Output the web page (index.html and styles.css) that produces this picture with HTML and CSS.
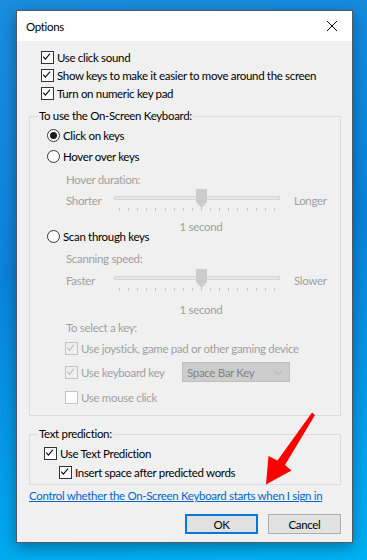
FILE: index.html
```html
<!DOCTYPE html>
<html lang="en">

<head>
    <meta charset="UTF-8">
    <meta name="viewport" content="width=device-width, initial-scale=1.0">
    <title>Options</title>
    <link rel="stylesheet" href="styles.css">
</head>

<body>
    <div class="dialog">
        <div class="titlebar">
            <span class="title">Options</span>
            <svg class="close" width="12" height="12" viewBox="0 0 12 12">
                <path d="M1 1 L11 11 M11 1 L1 11" stroke="#000" stroke-width="1" fill="none" />
            </svg>
        </div>

        <div class="content">
            <div class="top-checks">
                <div class="check-row">
                    <span class="box"><svg viewBox="0 0 13 13"><path d="M2.5 6.5 L5 9.5 L10.5 3" /></svg></span>
                    Use click sound
                </div>
                <div class="check-row">
                    <span class="box"><svg viewBox="0 0 13 13"><path d="M2.5 6.5 L5 9.5 L10.5 3" /></svg></span>
                    Show keys to make it easier to move around the screen
                </div>
                <div class="check-row">
                    <span class="box"><svg viewBox="0 0 13 13"><path d="M2.5 6.5 L5 9.5 L10.5 3" /></svg></span>
                    Turn on numeric key pad
                </div>
            </div>

            <fieldset class="group group-keyboard">
                <legend>To use the On-Screen Keyboard:</legend>

                <div class="radio-row radio-first"><span class="radio on"></span>Click on keys</div>
                <div class="radio-row radio-hover"><span class="radio"></span>Hover over keys</div>

                <div class="caption caption-hover">Hover duration:</div>
                <div class="slider-row">
                    <span>Shorter</span>
                    <div class="slider">
                        <div class="track"></div>
                        <svg class="thumb" width="11" height="19" viewBox="0 0 11 19">
                            <path d="M0 0 H11 V13 L5.5 19 L0 13 Z" fill="#cccccc" />
                        </svg>
                        <div class="ticks">
                            <i></i><i></i><i></i><i></i><i></i><i></i><i></i><i></i><i></i>
                            <i></i><i></i><i></i><i></i><i></i><i></i><i></i><i></i><i></i>
                        </div>
                    </div>
                    <span class="end-right">Longer</span>
                </div>
                <div class="value value-hover">1 second</div>

                <div class="radio-row radio-scan"><span class="radio"></span>Scan through keys</div>

                <div class="caption caption-scan">Scanning speed:</div>
                <div class="slider-row slider-scan">
                    <span>Faster</span>
                    <div class="slider">
                        <div class="track"></div>
                        <svg class="thumb" width="11" height="19" viewBox="0 0 11 19">
                            <path d="M0 0 H11 V13 L5.5 19 L0 13 Z" fill="#cccccc" />
                        </svg>
                        <div class="ticks">
                            <i></i><i></i><i></i><i></i><i></i><i></i><i></i><i></i><i></i>
                            <i></i><i></i><i></i><i></i><i></i><i></i><i></i><i></i><i></i>
                        </div>
                    </div>
                    <span class="end-right">Slower</span>
                </div>
                <div class="value value-scan">1 second</div>

                <div class="caption caption-select">To select a key:</div>
                <div class="check-row sub-check joystick">
                    <span class="box off"><svg viewBox="0 0 13 13"><path d="M2.5 6.5 L5 9.5 L10.5 3" /></svg></span>
                    Use joystick, game pad or other gaming device
                </div>
                <div class="check-row sub-check keyboard-key">
                    <span class="box off"><svg viewBox="0 0 13 13"><path d="M2.5 6.5 L5 9.5 L10.5 3" /></svg></span>
                    <span class="key-label">Use keyboard key</span>
                    <div class="combo">
                        <span>Space Bar Key</span>
                        <svg width="9" height="5" viewBox="0 0 9 5">
                            <path d="M0.5 0.5 L4.5 4.5 L8.5 0.5" stroke="#b4b4b4" fill="none" />
                        </svg>
                    </div>
                </div>
                <div class="check-row sub-check mouse-click">
                    <span class="box off empty"></span>
                    Use mouse click
                </div>
            </fieldset>

            <fieldset class="group group-prediction">
                <legend>Text prediction:</legend>
                <div class="check-row prediction-row">
                    <span class="box"><svg viewBox="0 0 13 13"><path d="M2.5 6.5 L5 9.5 L10.5 3" /></svg></span>
                    Use Text Prediction
                </div>
                <div class="check-row prediction-row insert-row">
                    <span class="box"><svg viewBox="0 0 13 13"><path d="M2.5 6.5 L5 9.5 L10.5 3" /></svg></span>
                    Insert space after predicted words
                </div>
            </fieldset>

            <a class="link" href="#">Control whether the On-Screen Keyboard starts when I sign in</a>

            <div class="buttons">
                <button class="btn btn-default">OK</button>
                <button class="btn">Cancel</button>
            </div>
        </div>
    </div>

    <!-- annotation arrow drawn over the dialog -->
    <svg class="arrow" width="367" height="560" viewBox="0 0 367 560">
        <path d="M312 412.5 L315 415 L285 465 L291.5 470.5 L266 484.5 L268.5 456 L277.5 460.5 Z" fill="#ff0000" />
    </svg>
</body>

</html>
```

FILE: styles.css
```css
* {
    margin: 0;
    padding: 0;
    box-sizing: border-box;
}

body {
    position: relative;
    width: 367px;
    height: 560px;
    overflow: hidden;
    font-family: Lato, "Liberation Sans", sans-serif;
    font-size: 11.5px;
    letter-spacing: -0.33px;
    color: #000;
    background: linear-gradient(170deg, #1a8ddf 0%, #0a84da 45%, #02a6ee 85%, #00b2f4 100%);
    padding: 10px 0 0 16px;
}

.dialog {
    width: 337px;
    background: #f0f0f0;
    border: 1px solid #4d5a66;
    box-shadow: 0 4px 14px rgba(0, 0, 0, 0.35);
}

.titlebar {
    height: 30px;
    background: #fff;
    display: flex;
    align-items: center;
    justify-content: space-between;
    padding: 0 14px 0 9px;
}

.close {
    display: block;
}

.content {
    padding: 7px 11px 8px 12px;
}

/* checkboxes */

.check-row {
    display: flex;
    align-items: center;
    height: 18px;
    white-space: nowrap;
}

.top-checks {
    padding-left: 12px;
}

.box {
    width: 13px;
    height: 13px;
    border: 1px solid #333;
    background: #fff;
    margin-right: 3px;
    flex-shrink: 0;
    display: flex;
}

.box svg {
    width: 11px;
    height: 11px;
    margin: 0;
}

.box path {
    fill: none;
    stroke: #000;
    stroke-width: 1.2;
    transform: translate(-1px, -1px);
}

.box.off {
    border-color: #c4c4c4;
    background: #f0f0f0;
}

.box.off path {
    stroke: #b8b8b8;
}

.box.empty {
    background: #fff;
}

/* group boxes */

.group {
    border: 1px solid #dcdcdc;
    border-radius: 0;
    margin-top: 6px;
    padding: 2px 0 9px 0;
}

.group legend {
    margin-left: 8px;
    padding: 0 1px;
    line-height: 16px;
}

.radio-row {
    display: flex;
    align-items: center;
    height: 18px;
    padding-left: 17px;
}

.radio {
    width: 13px;
    height: 13px;
    border: 1px solid #333;
    border-radius: 50%;
    background: #fff;
    margin-right: 3px;
    display: flex;
    align-items: center;
    justify-content: center;
}

.radio.on::after {
    content: "";
    width: 7px;
    height: 7px;
    border-radius: 50%;
    background: #1a1a1a;
}

.radio-hover {
    margin-top: 3px;
}

.caption,
.value,
.slider-row,
.sub-check {
    color: #a0a0a0;
}

.caption {
    line-height: 16px;
    padding-left: 36px;
}

.caption-hover {
    margin-top: 7px;
}

.caption-scan {
    margin-top: 6px;
}

.slider-row {
    display: flex;
    align-items: center;
    height: 24px;
    padding-left: 36px;
}

.slider-row > span:first-child {
    width: 48px;
}

.slider-scan {
    margin-top: 1px;
}

.slider {
    position: relative;
    width: 166px;
    height: 24px;
}

.track {
    margin-top: 8px;
    height: 4px;
    border: 1px solid #d6d6d6;
    background: #e7e7e7;
}

.thumb {
    position: absolute;
    left: 82px;
    top: 1px;
}

.ticks {
    display: flex;
    justify-content: space-between;
    margin: 8px 5px 0 5px;
}

.ticks i {
    width: 1px;
    height: 3px;
    background: #c8c8c8;
}

.end-right {
    margin-left: 14px;
}

.value {
    line-height: 12px;
    text-align: center;
    margin-left: 88px;
    width: 166px;
}

.value-hover {
    margin-top: 9px;
}

.value-scan {
    margin-top: 12px;
}

.radio-scan {
    margin-top: -6px;
}

.caption-select {
    margin-top: 4px;
}

.sub-check {
    padding-left: 35px;
}

.joystick {
    margin-top: 3px;
}

.keyboard-key {
    margin-top: 5px;
    height: 20px;
}

.key-label {
    width: 101px;
}

.combo {
    width: 108px;
    height: 20px;
    background: #cccccc;
    border: 1px solid #bfbfbf;
    color: #838383;
    display: flex;
    align-items: center;
    justify-content: space-between;
    padding: 0 6px 0 4px;
}

.mouse-click {
    margin-top: 6px;
}

.group-prediction {
    margin-top: 10px;
    padding: 2px 0 3px 0;
}

.prediction-row {
    padding-left: 14px;
}

.insert-row {
    margin-top: 1px;
    padding-left: 29px;
}

.link {
    display: block;
    margin-top: 3px;
    line-height: 16px;
    color: #0066cc;
    text-decoration: underline;
    white-space: nowrap;
}

.buttons {
    display: flex;
    justify-content: flex-end;
    gap: 10px;
    margin-top: 10px;
}

.btn {
    width: 73px;
    height: 20px;
    font: inherit;
    letter-spacing: inherit;
    color: #000;
    background: #e1e1e1;
    border: 1px solid #adadad;
}

.btn-default {
    border: 2px solid #0078d7;
}

.arrow {
    position: absolute;
    top: 0;
    left: 0;
    pointer-events: none;
}
```
